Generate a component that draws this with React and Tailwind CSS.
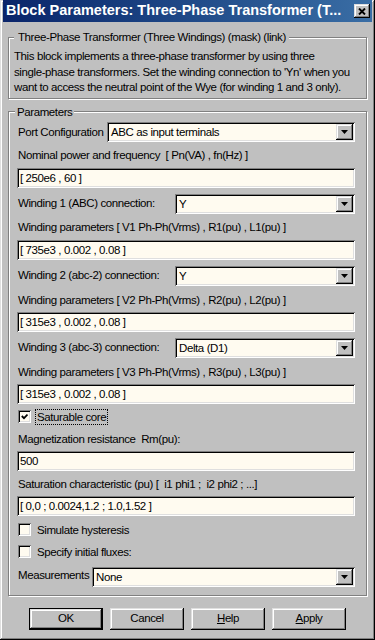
import React from 'react';

const sunken =
  'shadow-[inset_1px_1px_0_#808080,inset_-1px_-1px_0_#ffffff,inset_2px_2px_0_#000000,inset_-2px_-2px_0_#dfdfdf]';
const raised =
  'shadow-[inset_-1px_-1px_0_#000000,inset_1px_1px_0_#dfdfdf,inset_-2px_-2px_0_#808080,inset_2px_2px_0_#ffffff]';

const Label = ({ children, className = '' }) => (
  <div className={`h-[14px] leading-[14px] pl-[1px] whitespace-nowrap ${className}`}>{children}</div>
);

const Field = ({ value, className = '' }) => (
  <div className={`h-[20px] bg-[#fffbf0] ${sunken} pl-[3px] pt-[2px] leading-[16px] whitespace-nowrap ${className}`}>
    {value}
  </div>
);

const Select = ({ value, className = '' }) => (
  <div className={`h-[20px] bg-[#fffbf0] ${sunken} flex p-[2px] ${className}`}>
    <div className="flex-1 pl-[2px] leading-[16px] whitespace-nowrap">{value}</div>
    <div className={`w-[17px] h-[16px] bg-[#c0c0c0] ${raised} flex items-center justify-center`}>
      <svg width="7" height="4" viewBox="0 0 7 4">
        <path d="M0 0h7L3.5 4z" fill="#000" />
      </svg>
    </div>
  </div>
);

const Check = ({ label, checked, focused, className = '' }) => (
  <div className={`h-[16px] flex items-center pl-[1px] ${className}`}>
    <div className={`w-[13px] h-[13px] bg-[#fffbf0] ${sunken} flex items-center justify-center`}>
      {checked && (
        <svg width="7" height="7" viewBox="0 0 7 7">
          <path d="M0.8 3L3 5.2L6.5 1.5" stroke="#000" strokeWidth="1.8" fill="none" />
        </svg>
      )}
    </div>
    <span
      className={`ml-[4px] px-[1px] leading-[14px] whitespace-nowrap border ${
        focused ? 'border-dotted border-black' : 'border-transparent'
      }`}
    >
      {label}
    </span>
  </div>
);

const Btn = ({ children, isDefault }) => (
  <div className={`w-[74px] h-[22px] ${isDefault ? 'border border-black' : ''}`}>
    <div className={`w-full h-full bg-[#c0c0c0] ${raised} flex items-center justify-center`}>{children}</div>
  </div>
);

const App = () => {
  return (
    <div
      className={`w-[375px] h-[640px] bg-[#c0c0c0] px-[3px] pb-[3px] flex flex-col text-black text-[11.5px] tracking-[-0.4px] font-['Liberation_Sans',Arial,sans-serif] shadow-[inset_-1px_-1px_0_#000000,inset_1px_1px_0_#dfdfdf,inset_-2px_-2px_0_#808080,inset_2px_2px_0_#ffffff]`}
    >
      {/* Title bar */}
      <div className="h-[22px] bg-linear-to-r from-[#0a246a] to-[#3a6ea5] flex items-center pl-[3px] pr-[2px]">
        <span className="flex-1 text-white font-bold text-[14.5px] tracking-normal whitespace-nowrap">
          Block Parameters: Three-Phase Transformer (T...
        </span>
        <div className={`w-[16px] h-[14px] bg-[#c0c0c0] ${raised} flex items-center justify-center`}>
          <svg width="8" height="7" viewBox="0 0 8 7">
            <path d="M1 0.5L7 6.5M7 0.5L1 6.5" stroke="#000" strokeWidth="1.9" />
          </svg>
        </div>
      </div>

      {/* Description */}
      <fieldset className="mt-[8px] ml-[5px] w-[359px] border border-[#808080] shadow-[inset_1px_1px_0_#ffffff,1px_1px_0_#ffffff] pl-[5px] pt-[5px] pb-[2px]">
        <legend className="pl-[4px] pr-[3px] leading-[14px] bg-[#c0c0c0] whitespace-nowrap">
          Three-Phase Transformer (Three Windings) (mask) (link)
        </legend>
        <p className="leading-[15.5px] whitespace-nowrap">
          This block implements a three-phase transformer by using three
          <br />
          single-phase transformers. Set the winding connection to 'Yn' when you
          <br />
          want to access the neutral point of the Wye (for winding 1 and 3 only).
        </p>
      </fieldset>

      {/* Parameters */}
      <fieldset className="mt-[6px] ml-[5px] w-[359px] border border-[#808080] shadow-[inset_1px_1px_0_#ffffff,1px_1px_0_#ffffff] pl-[8px] pr-[11px] pb-[8px] flex flex-col">
        <legend className="-ml-[2px] px-[2px] leading-[14px] bg-[#c0c0c0] whitespace-nowrap">Parameters</legend>

        <div className="mt-[3px] flex items-center">
          <Label>Port Configuration</Label>
          <Select value="ABC as input terminals" className="ml-auto w-[248px]" />
        </div>

        <Label className="mt-[6px]">Nominal power and frequency&nbsp;&nbsp;[ Pn(VA) , fn(Hz) ]</Label>
        <Field value="[ 250e6 , 60 ]" className="mt-[6px]" />

        <div className="mt-[6px] flex items-center">
          <Label className="-mt-[2px]">Winding 1 (ABC) connection:</Label>
          <Select value="Y" className="ml-auto w-[180px]" />
        </div>
        <Label className="mt-[6px]">Winding parameters [ V1 Ph-Ph(Vrms) , R1(pu) , L1(pu) ]</Label>
        <Field value="[ 735e3 , 0.002 , 0.08 ]" className="mt-[6px]" />

        <div className="mt-[6px] flex items-center">
          <Label className="-mt-[2px]">Winding 2 (abc-2) connection:</Label>
          <Select value="Y" className="ml-auto w-[180px]" />
        </div>
        <Label className="mt-[7px]">Winding parameters [ V2 Ph-Ph(Vrms) , R2(pu) , L2(pu) ]</Label>
        <Field value="[ 315e3 , 0.002 , 0.08 ]" className="mt-[5px]" />

        <div className="mt-[6px] flex items-center">
          <Label className="-mt-[2px]">Winding 3 (abc-3) connection:</Label>
          <Select value="Delta (D1)" className="ml-auto w-[180px]" />
        </div>
        <Label className="mt-[7px]">Winding parameters [ V3 Ph-Ph(Vrms) , R3(pu) , L3(pu) ]</Label>
        <Field value="[ 315e3 , 0.002 , 0.08 ]" className="mt-[5px]" />

        <Check label="Saturable core" checked focused className="mt-[5px]" />

        <Label className="mt-[7px]">Magnetization resistance&nbsp;&nbsp;Rm(pu):</Label>
        <Field value="500" className="mt-[5px]" />

        <Label className="mt-[6px]">Saturation characteristic (pu) [&nbsp;&nbsp;i1 phi1 ;&nbsp;&nbsp;i2 phi2 ; ...]</Label>
        <Field value="[ 0,0 ; 0.0024,1.2 ; 1.0,1.52 ]" className="mt-[5px]" />

        <Check label="Simulate hysteresis" className="mt-[6px]" />
        <Check label="Specify initial fluxes:" className="mt-[6px]" />

        <div className="mt-[7px] flex items-center">
          <Label className="-mt-[3px]">Measurements</Label>
          <Select value="None" className="ml-auto w-[263px]" />
        </div>
      </fieldset>

      {/* Buttons */}
      <div className="mt-[12px] flex justify-center gap-[7px]">
        <Btn isDefault>OK</Btn>
        <Btn>Cancel</Btn>
        <Btn>
          <span>
            <span className="underline">H</span>elp
          </span>
        </Btn>
        <Btn>
          <span>
            <span className="underline">A</span>pply
          </span>
        </Btn>
      </div>
    </div>
  );
};

export default App;
